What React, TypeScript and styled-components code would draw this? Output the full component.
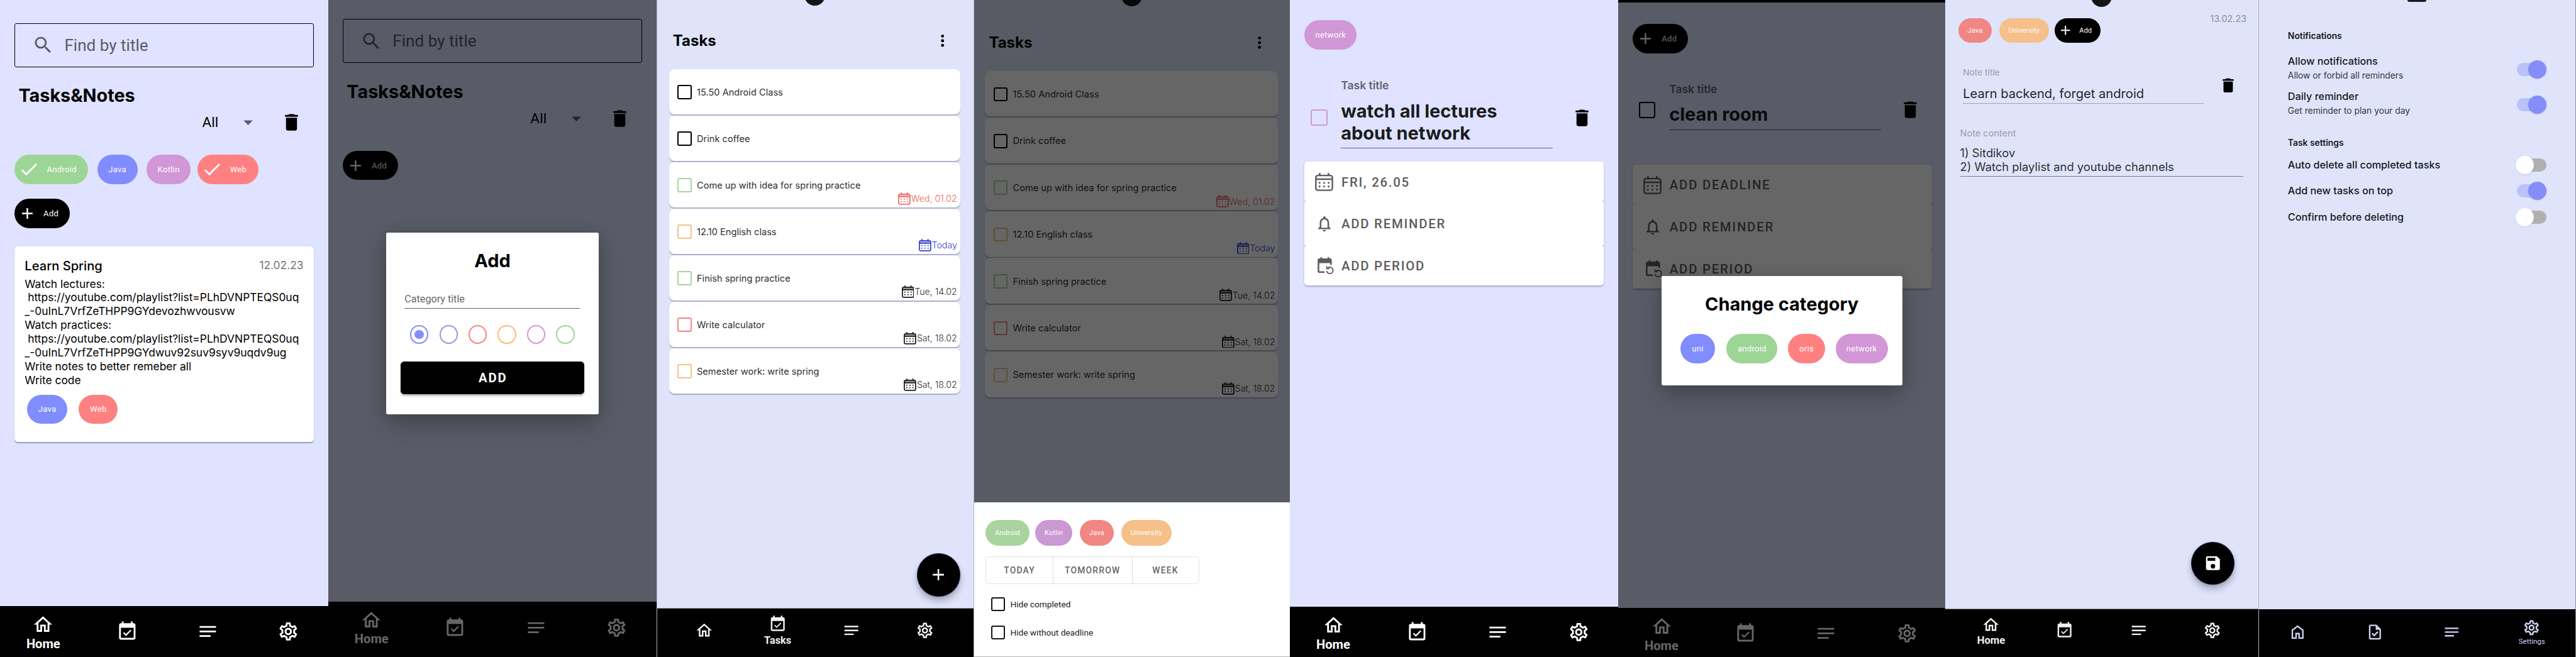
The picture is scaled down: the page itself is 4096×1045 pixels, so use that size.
import React from 'react';
import styled, { createGlobalStyle, css } from 'styled-components';
import { MdOutlineSettings } from 'react-icons/md';

/* 1rem = ten design pixels of the 5148px wide board */
const GlobalStyle = createGlobalStyle`
  html { font-size: 7.9565px; }
  body { margin: 0; background: #fff; overflow: hidden; font-family: Inter, Roboto, sans-serif; color: #000; }
  *, *::before, *::after { box-sizing: border-box; }
`;

const rem = (n: number) => `${n / 10}rem`;
const roboto = css`font-family: Roboto, 'Noto Sans', sans-serif;`;

const palette = {
  lavender: '#dfe3ff',
  mist: '#dfe4fb',
  green: '#9dd596',
  blue: '#818cff',
  violet: '#a097d5',
  purple: '#d197d6',
  red: '#ff8080',
  orange: '#fdbb78',
  softGreen: '#a9d49d',
  softPurple: '#ca98d2',
  softRed: '#f08784',
  softOrange: '#f5c089',
};

const Board = styled.div`
  display: flex;
  width: 100vw;
  height: 1045px;
  overflow: hidden;
`;

const Screen = styled.section<{ $w: number; $bg: string }>`
  position: relative;
  flex: none;
  display: flex;
  flex-direction: column;
  width: ${(p) => rem(p.$w)};
  height: 1045px;
  background: ${(p) => p.$bg};
  overflow: hidden;
`;

const EdgedScreen = styled(Screen)`
  border-left: 0.2rem solid #b0b3c3;
`;

const Scrim = styled.div`
  position: absolute;
  inset: 0;
  background: rgba(0, 0, 0, 0.6);
`;

const Camera = styled.div<{ $x: number; $y: number }>`
  position: absolute;
  left: ${(p) => rem(p.$x - 21)};
  top: ${(p) => rem(p.$y - 21)};
  width: 4.2rem;
  height: 4.2rem;
  border-radius: 50%;
  background: #151517;
`;

/* ---------- icons ---------- */

const Svg = styled.svg<{ $s: number }>`
  flex: none;
  display: block;
  width: ${(p) => rem(p.$s)};
  height: ${(p) => rem(p.$s)};
  fill: currentColor;
`;

const paths = {
  search: 'M15.5 14h-.79l-.28-.27A6.471 6.471 0 0 0 16 9.5 6.5 6.5 0 1 0 9.5 16c1.61 0 3.09-.59 4.23-1.57l.27.28v.79l5 4.99L20.49 19l-4.99-5zm-6 0C7.01 14 5 11.99 5 9.5S7.01 5 9.5 5 14 7.01 14 9.5 11.99 14 9.5 14z',
  trash: 'M6 19c0 1.1.9 2 2 2h8c1.1 0 2-.9 2-2V7H6v12zM19 4h-3.5l-1-1h-5l-1 1H5v2h14V4z',
  caret: 'M7 10l5 5 5-5z',
  check: 'M9 16.17L4.83 12l-1.42 1.41L9 19 21 7l-1.41-1.41z',
  plus: 'M19 13h-6v6h-2v-6H5v-2h6V5h2v6h6v2z',
  home: 'M12 5.69l5 4.5V18h-2v-6H9v6H7v-7.81l5-4.5M12 3L2 12h3v8h6v-6h2v6h6v-8h3L12 3z',
  homeNarrow: 'M6 19h3v-6h6v6h3v-9l-6-4.5L6 10v9zm-2 2V9l8-6 8 6v12h-7v-6h-2v6H4z',
  tasks: 'M16.53 11.06L15.47 10l-4.88 4.88-2.12-2.12-1.06 1.06L10.59 17l5.94-5.94zM19 3h-1V1h-2v2H8V1H6v2H5c-1.11 0-1.99.9-1.99 2L3 19c0 1.1.89 2 2 2h14c1.1 0 2-.9 2-2V5c0-1.1-.9-2-2-2zm0 16H5V8h14v11z',
  file: 'M10.95 18l5.65-5.65-1.45-1.45-4.225 4.225-2.1-2.1L7.4 14.45 10.95 18zM6 22q-.825 0-1.412-.587Q4 20.825 4 20V4q0-.825.588-1.413Q5.175 2 6 2h8l6 6v12q0 .825-.587 1.413Q18.825 22 18 22H6zm7-13V4H6v16h12V9h-5z',
  notes: 'M21 11.01L3 11v2h18zM3 16h12v2H3zM21 6H3v2.01L21 8z',
  bell: 'M12 22c1.1 0 2-.9 2-2h-4c0 1.1.9 2 2 2zm6-6v-5c0-3.07-1.63-5.64-4.5-6.32V4c0-.83-.67-1.5-1.5-1.5s-1.5.67-1.5 1.5v.68C7.64 5.36 6 7.92 6 11v5l-2 2v1h16v-1l-2-2zm-2 1H8v-6c0-2.48 1.51-4.5 4-4.5s4 2.02 4 4.5v6z',
  save: 'M17 3H5a2 2 0 0 0-2 2v14a2 2 0 0 0 2 2h14c1.1 0 2-.9 2-2V7l-4-4zm-5 16c-1.66 0-3-1.34-3-3s1.34-3 3-3 3 1.34 3 3-1.34 3-3 3zm3-10H5V5h10v4z',
  more: 'M12 8c1.1 0 2-.9 2-2s-.9-2-2-2-2 .9-2 2 .9 2 2 2zm0 2c-1.1 0-2 .9-2 2s.9 2 2 2 2-.9 2-2-.9-2-2-2zm0 6c-1.1 0-2 .9-2 2s.9 2 2 2 2-.9 2-2-.9-2-2-2z',
};

type Glyph = keyof typeof paths;

const Icon = ({ name, size, className }: { name: Glyph; size: number; className?: string }) => (
  <Svg $s={size} viewBox="0 0 24 24" className={className}>
    <path d={paths[name]} />
  </Svg>
);

const CalendarIcon = ({ size, shaded }: { size: number; shaded?: boolean }) => (
  <Svg $s={size} viewBox="0 0 36 36">
    {shaded && <path d="M2 6h32v6H2z" opacity="0.45" />}
    <rect x="1.6" y="5.2" width="32.8" height="29.2" rx="4" fill="none" stroke="currentColor" strokeWidth={shaded ? 3.3 : 3} />
    <path d="M1.5 11h33v3h-33zM7.6 1q0-1 1.700-1t1.700 1v5H7.600zM25 1q0-1 1.700-1t1.700 1v5H25z" />
    {[19.6, 26.8].map((y) => [9, 18, 27].map((x) => <circle key={`${x}-${y}`} cx={x} cy={y} r="1.9" />))}
  </Svg>
);

const PeriodIcon = ({ size }: { size: number }) => (
  <Svg $s={size} viewBox="0 0 34 34">
    <path d="M6 0h3v2.6h11.2V0h3v2.6H25q3.4 0 3.4 3.4v9.5h-3.2V12H3.4v16.2H14v3.2H3.2Q.2 31.4.2 28.2V6q0-3.4 3.3-3.4H6z" />
    <path d="M19.6 22.4a6.4 6.4 0 1 1-1.4 5" fill="none" stroke="currentColor" strokeWidth="2.3" />
    <path d="M17.2 17.6h2v4.5h4.300v2h-6.300z" />
  </Svg>
);

/* ---------- shared controls ---------- */

const ChipBox = styled.span<{ $w: number; $h: number; $bg: string; $font: number; $icon: boolean; $ml: number }>`
  flex: none;
  display: flex;
  align-items: center;
  justify-content: ${(p) => (p.$icon ? 'flex-start' : 'center')};
  gap: ${(p) => rem(p.$h * 0.24)};
  width: ${(p) => rem(p.$w)};
  height: ${(p) => rem(p.$h)};
  margin-left: ${(p) => rem(p.$ml)};
  padding-left: ${(p) => (p.$icon ? rem(p.$h * 0.127) : 0)};
  border-radius: 99rem;
  background: ${(p) => p.$bg};
  color: #fff;
  ${roboto}
  font-size: ${(p) => rem(p.$font)};
  letter-spacing: 0.024em;
  white-space: nowrap;
`;

type ChipProps = { label: string; bg: string; w: number; h?: number; font?: number; icon?: Glyph; ml?: number };

const Chip = ({ label, bg, w, h = 58.6, font = 16.4, icon, ml = 0 }: ChipProps) => (
  <ChipBox $w={w} $h={h} $bg={bg} $font={font} $icon={!!icon} $ml={ml}>
    {icon && <Icon name={icon} size={icon === 'check' ? h * 0.735 : h * 0.62} />}
    {label}
  </ChipBox>
);

const AddChip = () => <Chip label="Add" bg="#000" w={110.5} icon="plus" />;

const Row = styled.div<{ $mt?: number; $pl?: number; $gap?: number }>`
  display: flex;
  margin-top: ${(p) => rem(p.$mt ?? 0)};
  padding-left: ${(p) => rem(p.$pl ?? 0)};
  gap: ${(p) => rem(p.$gap ?? 0)};
`;

const Box = styled.span<{ $s: number; $c: string; $mt?: number }>`
  flex: none;
  width: ${(p) => rem(p.$s)};
  height: ${(p) => rem(p.$s)};
  margin-top: ${(p) => rem(p.$mt ?? 0)};
  border: ${(p) => rem(p.$s * 0.112)} solid ${(p) => p.$c};
  border-radius: ${(p) => rem(p.$s * 0.13)};
`;

const Fab = styled.button<{ $x: number; $y: number }>`
  position: absolute;
  left: ${(p) => rem(p.$x)};
  top: ${(p) => rem(p.$y)};
  display: grid;
  place-items: center;
  width: 8.6rem;
  height: 8.6rem;
  padding: 0;
  border: 0.1rem solid #15154d;
  border-radius: 50%;
  background: #000;
  color: #fff;
  box-shadow: 0 0.9rem 1.4rem rgba(0, 0, 0, 0.24), 0 0.2rem 0.6rem rgba(0, 0, 0, 0.14);
`;

/* ---------- bottom navigation ---------- */

const NavBar = styled.nav<{ $h: number; $edge: string; $pl: number; $c: string }>`
  flex: none;
  display: flex;
  height: ${(p) => rem(p.$h)};
  margin-top: auto;
  padding-left: ${(p) => rem(p.$pl)};
  background: #000;
  color: ${(p) => p.$c};
  box-shadow: 0 -0.15rem 0.1rem ${(p) => p.$edge};
`;

const NavItem = styled.a<{ $w: number; $top: number }>`
  flex: none;
  display: flex;
  flex-direction: column;
  align-items: center;
  width: ${(p) => rem(p.$w)};
  padding-top: ${(p) => rem(p.$top)};
`;

const NavLabel = styled.span<{ $size: number; $bold: boolean; $mt: number }>`
  ${roboto}
  margin-top: ${(p) => rem(p.$mt)};
  font-size: ${(p) => rem(p.$size)};
  font-weight: ${(p) => (p.$bold ? 700 : 400)};
  line-height: 2.8rem;
`;

const Gear = styled(MdOutlineSettings)<{ $s: number }>`
  flex: none;
  width: ${(p) => rem(p.$s)};
  height: ${(p) => rem(p.$s)};
`;

type NavProps = {
  h: number;
  active: 'Home' | 'Tasks' | 'Settings';
  widths: number[];
  icon: number;
  center: number;
  activeCenter: number;
  labelCenter: number;
  label: number;
  bold?: boolean;
  pl?: number;
  color?: string;
  edge?: string;
  symbols?: Glyph[];
};

const BottomNav = (p: NavProps) => {
  const [first, second, third] = p.symbols ?? ['home', 'tasks', 'notes'];
  const items: [string, Glyph | null][] = [
    ['Home', first],
    ['Tasks', second],
    ['Notes', third],
    ['Settings', null],
  ];
  return (
    <NavBar $h={p.h} $edge={p.edge ?? 'transparent'} $pl={p.pl ?? 0} $c={p.color ?? '#fff'}>
      {items.map(([name, glyph], i) => {
        const on = name === p.active;
        const mid = on ? p.activeCenter : p.center;
        return (
          <NavItem key={name} $w={p.widths[i]} $top={mid - p.icon / 2}>
            {glyph ? <Icon name={glyph} size={p.icon} /> : <Gear $s={p.icon} />}
            {on && (
              <NavLabel $size={p.label} $bold={p.bold ?? true} $mt={p.labelCenter - 14 - mid - p.icon / 2}>
                {name}
              </NavLabel>
            )}
          </NavItem>
        );
      })}
    </NavBar>
  );
};

const wideNav = { widths: [173, 161.5, 161.5, 161.5], icon: 43.7, center: 50.3, activeCenter: 36.8, labelCenter: 75.3, label: 25.3 };
const compactNav = { widths: [147.3, 147.3, 147.3, 147.3], icon: 37, center: 43.2 };

/* ---------- home ---------- */

const HomeBody = styled.div<{ $top: number }>`
  display: flex;
  flex-direction: column;
  padding: ${(p) => rem(p.$top)} 2.85rem 0 2.9rem;
`;

const SearchField = styled.div`
  display: flex;
  align-items: center;
  gap: 2.1rem;
  height: 8.75rem;
  padding-left: 3.35rem;
  border: 0.2rem solid #000;
  border-radius: 0.4rem;
  color: #5a5c68;
  ${roboto}
  font-size: 3.28rem;
`;

const HomeTitle = styled.h1`
  margin: 3.5rem 0 0 0.8rem;
  font-size: 3.62rem;
  font-weight: 700;
  line-height: 4.4rem;
`;

const FilterRow = styled.div`
  display: flex;
  align-items: center;
  height: 4.4rem;
  margin: 1rem 0 4.25rem;
  padding-left: 37.5rem;
`;

const FilterValue = styled.span`
  ${roboto}
  width: 7rem;
  font-size: 2.85rem;
`;

const CaretIcon = styled(Icon)`
  margin-right: 4.3rem;
  color: #5a5c68;
`;

const HomeHeader = () => (
  <>
    <SearchField>
      <Icon name="search" size={44} />
      Find by title
    </SearchField>
    <HomeTitle>Tasks&amp;Notes</HomeTitle>
    <FilterRow>
      <FilterValue>All</FilterValue>
      <CaretIcon name="caret" size={44} />
      <Icon name="trash" size={44} />
    </FilterRow>
  </>
);

const NoteCard = styled.article`
  height: 39.15rem;
  margin-top: 3.6rem;
  padding: 2.6rem 2.1rem 0 2.05rem;
  border-radius: 0.7rem;
  background: #fff;
  box-shadow: 0 0.2rem 0.2rem rgba(60, 70, 100, 0.45);
`;

const NoteHead = styled.header`
  display: flex;
  justify-content: space-between;
  font-size: 2.53rem;
  font-weight: 500;
  line-height: 3rem;
`;

const NoteDate = styled.time`
  color: #757575;
  font-size: 2.187rem;
  font-weight: 400;
  line-height: 2.6rem;
`;

const NoteText = styled.p`
  margin: 0.55rem 0 1.5rem;
  font-size: 2.187rem;
  line-height: 2.75rem;
  white-space: pre;
`;

const noteText = [
  'Watch lectures:',
  ' https://youtube.com/playlist?list=PLhDVNPTEQS0uq',
  '_-0uInL7VrfZeTHPP9GYdevozhwvousvw',
  'Watch practices:',
  ' https://youtube.com/playlist?list=PLhDVNPTEQS0uq',
  '_-0uInL7VrfZeTHPP9GYdwuv92suv9syv9uqdv9ug',
  'Write notes to better remeber all',
  'Write code',
].join('\n');

const HomeScreen = () => (
  <Screen $w={656} $bg={palette.lavender}>
    <HomeBody $top={46.5}>
      <HomeHeader />
      <Row $gap={18.3}>
        <Chip label="Android" bg={palette.green} w={147} icon="check" />
        <Chip label="Java" bg={palette.blue} w={80.5} />
        <Chip label="Kotlin" bg={palette.purple} w={88} />
        <Chip label="Web" bg={palette.red} w={121.5} icon="check" ml={-4.3} />
      </Row>
      <Row $mt={29.6}>
        <AddChip />
      </Row>
      <NoteCard>
        <NoteHead>
          Learn Spring
          <NoteDate>12.02.23</NoteDate>
        </NoteHead>
        <NoteText>{noteText}</NoteText>
        <Row $pl={4.5} $gap={22.7}>
          <Chip label="Java" bg={palette.blue} w={80.7} />
          <Chip label="Web" bg={palette.red} w={78.3} />
        </Row>
      </NoteCard>
    </HomeBody>
    <BottomNav {...wideNav} h={101.5} active="Home" />
  </Screen>
);

/* ---------- dialogs ---------- */

const Dialog = styled.div<{ $x: number; $y: number; $w: number; $h: number; $pt: number }>`
  position: absolute;
  left: ${(p) => rem(p.$x)};
  top: ${(p) => rem(p.$y)};
  display: flex;
  flex-direction: column;
  width: ${(p) => rem(p.$w)};
  height: ${(p) => rem(p.$h)};
  padding-top: ${(p) => rem(p.$pt)};
  border-radius: 0.35rem;
  background: #fff;
  box-shadow: 0 1.8rem 4.5rem rgba(0, 0, 0, 0.24), 0 0 2.5rem rgba(0, 0, 0, 0.08);
`;

const DialogTitle = styled.h2`
  margin: 0;
  text-align: center;
  font-size: 3.64rem;
  font-weight: 700;
  line-height: 4.4rem;
`;

const CategoryInput = styled.div`
  width: 35.05rem;
  margin: 4.1rem 0 0 3.63rem;
  padding-bottom: 0.35rem;
  border-bottom: 0.15rem solid #606060;
  color: #696969;
  ${roboto}
  font-size: 2.03rem;
  line-height: 2.8rem;
`;

const Swatches = styled.div`
  display: flex;
  gap: 2.16rem;
  margin: 3.35rem 0 0 4.74rem;
`;

const Swatch = styled.span<{ $c: string; $on: boolean }>`
  display: grid;
  place-items: center;
  width: 3.68rem;
  height: 3.68rem;
  border: 0.36rem solid ${(p) => p.$c};
  border-radius: 50%;
  &::after {
    content: '';
    width: 1.82rem;
    height: 1.82rem;
    border-radius: 50%;
    background: ${(p) => (p.$on ? p.$c : 'transparent')};
  }
`;

const PrimaryButton = styled.button`
  ${roboto}
  width: 36.6rem;
  height: 6.55rem;
  margin: 3.6rem 0 0 2.88rem;
  padding: 0 0 0 0.23rem;
  border: 0;
  border-radius: 0.7rem;
  background: #000;
  color: #fff;
  font-size: 2.55rem;
  font-weight: 700;
  letter-spacing: 0.0892em;
  box-shadow: 0 0.3rem 0.4rem rgba(0, 0, 0, 0.25);
`;

const swatches = [palette.blue, palette.violet, '#fe8080', palette.orange, palette.purple, palette.green];

const AddCategoryScreen = () => (
  <Screen $w={656} $bg={palette.lavender}>
    <HomeBody $top={38.3}>
      <HomeHeader />
      <Row>
        <AddChip />
      </Row>
    </HomeBody>
    <BottomNav {...wideNav} h={111} center={52} active="Home" />
    <Scrim />
    <Dialog $x={116.2} $y={465} $w={423.8} $h={363.5} $pt={34}>
      <DialogTitle>Add</DialogTitle>
      <CategoryInput>Category title</CategoryInput>
      <Swatches>
        {swatches.map((c, i) => (
          <Swatch key={c} $c={c} $on={i === 0} />
        ))}
      </Swatches>
      <PrimaryButton>ADD</PrimaryButton>
    </Dialog>
  </Screen>
);

/* ---------- task list ---------- */

const TasksHeader = styled.header<{ $top: number; $pl: number }>`
  display: flex;
  align-items: center;
  justify-content: space-between;
  height: 4rem;
  margin-top: ${(p) => rem(p.$top)};
  padding: 0 4.3rem 0 ${(p) => rem(p.$pl)};
`;

const TasksTitle = styled.h1`
  margin: 0;
  font-size: 3.02rem;
  font-weight: 700;
`;

const List = styled.ul<{ $top: number; $pl: number; $gap: number }>`
  display: flex;
  flex-direction: column;
  gap: ${(p) => rem(p.$gap)};
  margin: ${(p) => rem(p.$top)} 0 0 ${(p) => rem(p.$pl)};
  padding: 0;
  list-style: none;
`;

const TaskCard = styled.li<{ $w: number; $h: number }>`
  display: flex;
  align-items: center;
  gap: 1.05rem;
  width: ${(p) => rem(p.$w)};
  height: ${(p) => rem(p.$h)};
  padding: 0.2rem 0.6rem 0 1.65rem;
  border-radius: 1.1rem;
  background: #fff;
  color: #2f2f31;
  box-shadow: 0 0.2rem 0.15rem rgba(60, 70, 100, 0.35);
  font-size: 1.84rem;
`;

const Due = styled.time<{ $c: string; $ic: string }>`
  display: flex;
  align-items: center;
  align-self: flex-end;
  gap: 0.1rem;
  height: 2.6rem;
  margin: 0 0 0.46rem auto;
  color: ${(p) => p.$c};
  font-size: 1.78rem;
  font-weight: 300;
  svg { color: ${(p) => p.$ic}; }
`;

type Task = { title: string; color: string; due?: string; tone?: string; ink?: string };

const tasks: Task[] = [
  { title: '15.50 Android Class', color: '#000' },
  { title: 'Drink coffee', color: '#000' },
  { title: 'Come up with idea for spring practice', color: '#a9d49d', due: 'Wed, 01.02', tone: '#ee5f5b', ink: '#ee6c68' },
  { title: '12.10 English class', color: '#f5c089', due: 'Today', tone: '#3139cc', ink: '#3a42cc' },
  { title: 'Finish spring practice', color: '#a9d49d', due: 'Tue, 14.02' },
  { title: 'Write calculator', color: '#f08784', due: 'Sat, 18.02' },
  { title: 'Semester work: write spring', color: '#f5c089', due: 'Sat, 18.02' },
];

const TaskList = ({ w, h, gap, top, pl }: { w: number; h: number; gap: number; top: number; pl: number }) => (
  <List $top={top} $pl={pl} $gap={gap}>
    {tasks.map((t) => (
      <TaskCard key={t.title} $w={w} $h={h}>
        <Box $s={28.3} $c={t.color} />
        {t.title}
        {t.due && (
          <Due $c={t.tone ?? '#2f2f31'} $ic={t.ink ?? '#1a1a1a'}>
            <CalendarIcon size={24.8} shaded />
            {t.due}
          </Due>
        )}
      </TaskCard>
    ))}
  </List>
);

const TasksScreen = () => (
  <EdgedScreen $w={633} $bg={palette.mist}>
    <Camera $x={315} $y={-10} />
    <TasksHeader $top={61.5} $pl={31.3}>
      <TasksTitle>Tasks</TasksTitle>
      <Icon name="more" size={37} />
    </TasksHeader>
    <TaskList w={581.4} h={90.4} gap={2.6} top={36.8} pl={24} />
    <Fab $x={519.6} $y={1106.5}>
      <Icon name="plus" size={38} />
    </Fab>
    <BottomNav {...compactNav} h={96.6} pl={20} active="Tasks" activeCenter={30.9} labelCenter={63.8} label={20.43} color="#f2f2f2" edge="#7c7f8c" />
  </EdgedScreen>
);

const Sheet = styled.div`
  position: absolute;
  left: 0;
  right: 0;
  bottom: 0;
  height: 30.9rem;
  padding: 3.55rem 0 0 2.36rem;
  border-bottom: 0.15rem solid #b5b5b5;
  background: #fff;
`;

const Segments = styled.div`
  display: flex;
  width: 42.75rem;
  height: 5.57rem;
  margin: 2.1rem 0 1.25rem;
  border: 0.2rem solid #e2e2e2;
  border-radius: 0.6rem;
  ${roboto}
  font-size: 1.74rem;
  font-weight: 500;
  letter-spacing: 0.0892em;
  color: #656565;
`;

const Segment = styled.span<{ $w: number }>`
  display: grid;
  place-items: center;
  width: ${(p) => rem(p.$w)};
  & + & { border-left: 0.15rem solid #dcdcdc; }
`;

const CheckLine = styled.label`
  display: flex;
  align-items: center;
  gap: 1rem;
  height: 5.6rem;
  padding-left: 1.1rem;
  ${roboto}
  font-size: 1.72rem;
  color: #222;
`;

const TaskFilterScreen = () => (
  <EdgedScreen $w={633} $bg={palette.mist}>
    <Camera $x={315.5} $y={-8.5} />
    <TasksHeader $top={64.5} $pl={30}>
      <TasksTitle>Tasks</TasksTitle>
      <Icon name="more" size={37} />
    </TasksHeader>
    <TaskList w={585.3} h={91.2} gap={2.35} top={37.3} pl={22.6} />
    <Scrim />
    <Sheet>
      <Row>
        <Chip label="Android" bg={palette.softGreen} w={87.4} h={51} font={13.7} />
        <Chip label="Kotlin" bg={palette.softPurple} w={74.2} h={51} font={13.7} ml={11.4} />
        <Chip label="Java" bg={palette.softRed} w={68.7} h={51} font={13.7} ml={14.7} />
        <Chip label="University" bg={palette.softOrange} w={100.4} h={51} font={13.7} ml={14.6} />
      </Row>
      <Segments>
        <Segment $w={132.5}>TODAY</Segment>
        <Segment $w={158.3}>TOMORROW</Segment>
        <Segment $w={133}>WEEK</Segment>
      </Segments>
      <CheckLine>
        <Box $s={28.2} $c="#151515" />
        Hide completed
      </CheckLine>
      <CheckLine>
        <Box $s={28.2} $c="#151515" />
        Hide without deadline
      </CheckLine>
    </Sheet>
  </EdgedScreen>
);

/* ---------- task details ---------- */

const TitleEditor = styled.div<{ $mt: number }>`
  display: flex;
  align-items: flex-start;
  margin-top: ${(p) => rem(p.$mt)};
  padding-left: 4.16rem;
`;

const TitleField = styled.div`
  width: 42.35rem;
  margin: 0 3.6rem 0 2.73rem;
  padding-bottom: 0.72rem;
  border-bottom: 0.2rem solid #63656f;
`;

const FieldLabel = styled.div`
  margin-bottom: 1.58rem;
  color: #636571;
  font-size: 2.2rem;
  font-weight: 600;
  line-height: 2.8rem;
`;

const FieldValue = styled.div`
  color: #1b1c20;
  font-size: 3.64rem;
  font-weight: 700;
  line-height: 4.35rem;
  white-space: pre;
`;

const TrashSlot = styled.span<{ $mt: number }>`
  margin-top: ${(p) => rem(p.$mt)};
`;

const Options = styled.div<{ $mt: number }>`
  display: flex;
  flex-direction: column;
  width: 59.85rem;
  margin: ${(p) => rem(p.$mt)} 0 0 2.88rem;
  border-radius: 0.6rem;
  background: linear-gradient(#c7cbe0, #c7cbe0) 0 7.4rem / 100% 9.9rem no-repeat;
  box-shadow: 0 0.2rem 0.3rem rgba(60, 70, 100, 0.35);
`;

const Option = styled.div<{ $h: number; $round: boolean }>`
  display: flex;
  align-items: center;
  height: ${(p) => rem(p.$h)};
  padding-top: 0.2rem;
  border-radius: ${(p) => (p.$round ? '0.6rem' : 0)};
  background: #fff;
  color: #5b5c5c;
  ${roboto}
  font-size: 2.55rem;
  font-weight: 500;
  letter-spacing: 0.0892em;
`;

const OptionIcon = styled.span<{ $shift?: number }>`
  display: grid;
  place-items: center;
  width: 4rem;
  margin: 0 1.4rem 0 2rem;
  padding-left: ${(p) => rem(p.$shift ?? 0)};
`;

const OptionList = ({ mt, deadline }: { mt: number; deadline: string }) => (
  <Options $mt={mt}>
    <Option $h={80} $round>
      <OptionIcon><CalendarIcon size={36.3} /></OptionIcon>
      {deadline}
    </Option>
    <Option $h={87.2} $round={false}>
      <OptionIcon><Icon name="bell" size={37.5} /></OptionIcon>
      ADD REMINDER
    </Option>
    <Option $h={81.1} $round>
      <OptionIcon $shift={6}><PeriodIcon size={34} /></OptionIcon>
      ADD PERIOD
    </Option>
  </Options>
);

const TaskScreen = () => (
  <Screen $w={656} $bg={palette.lavender}>
    <Row $mt={40.8} $pl={28.8}>
      <Chip label="network" bg={palette.purple} w={104.7} h={59} />
    </Row>
    <TitleEditor $mt={57.9}>
      <Box $s={33} $c={palette.purple} $mt={61.2} />
      <TitleField>
        <FieldLabel>Task title</FieldLabel>
        <FieldValue>{'watch all lectures\nabout network'}</FieldValue>
      </TitleField>
      <TrashSlot $mt={55.6}><Icon name="trash" size={44} /></TrashSlot>
    </TitleEditor>
    <OptionList mt={26} deadline="FRI, 26.05" />
    <BottomNav {...wideNav} h={100} center={50} active="Home" />
  </Screen>
);

const StatusBar = styled.div`
  flex: none;
  height: 0.5rem;
  background: #000;
`;

const ChangeCategoryScreen = () => (
  <Screen $w={654} $bg={palette.lavender}>
    <StatusBar />
    <Row $mt={43} $pl={29}>
      <AddChip />
    </Row>
    <TitleEditor $mt={57.6}>
      <Box $s={33} $c="#000" $mt={39} />
      <TitleField>
        <FieldLabel>Task title</FieldLabel>
        <FieldValue>clean room</FieldValue>
      </TitleField>
      <TrashSlot $mt={33.6}><Icon name="trash" size={44} /></TrashSlot>
    </TitleEditor>
    <OptionList mt={69} deadline="ADD DEADLINE" />
    <BottomNav {...wideNav} h={98} center={50.3} active="Home" />
    <Scrim />
    <Dialog $x={86.2} $y={551.5} $w={481.2} $h={219} $pt={34}>
      <DialogTitle>Change category</DialogTitle>
      <Row $mt={38.5} $pl={38.6}>
        <Chip label="uni" bg={palette.blue} w={68.4} />
        <Chip label="android" bg={palette.green} w={101.7} ml={23.5} />
        <Chip label="oris" bg={palette.red} w={73.4} ml={21.4} />
        <Chip label="network" bg={palette.purple} w={104.7} ml={21} />
      </Row>
    </Dialog>
  </Screen>
);

/* ---------- note details ---------- */

const NoteTop = styled.header`
  display: flex;
  margin-top: 3.6rem;
  padding: 0 2.4rem 0 2.59rem;
`;

const NoteStamp = styled.time`
  margin: -0.93rem 0 0 auto;
  color: #8d8f9d;
  font-size: 1.8rem;
  line-height: 2.2rem;
`;

const NoteTitleRow = styled.div`
  display: flex;
  align-items: flex-start;
  margin-top: 4.8rem;
  padding-left: 3.49rem;
`;

const NoteField = styled.div<{ $w: number; $line: string }>`
  width: ${(p) => rem(p.$w)};
  border-bottom: ${(p) => p.$line};
`;

const NoteLabel = styled.div<{ $size: number }>`
  color: #9b9dad;
  font-size: ${(p) => rem(p.$size)};
  line-height: 2.4rem;
`;

const NoteTitle = styled.div`
  margin: 1.2rem 0 0.28rem;
  color: #25262b;
  font-size: 2.531rem;
  line-height: 3.4rem;
`;

const NoteContent = styled.div`
  margin: 1.15rem 0 0.43rem;
  color: #303238;
  font-size: 2.308rem;
  line-height: 2.8rem;
  white-space: pre;
`;

const ContentSlot = styled.div`
  margin: 4.8rem 0 0 2.9rem;
`;

const NoteTrash = styled.span`
  margin: 1.85rem 0 0 3rem;
`;

const NoteScreen = () => (
  <Screen $w={625.5} $bg={palette.mist}>
    <Camera $x={312} $y={-7} />
    <NoteTop>
      <Chip label="Java" bg={palette.softRed} w={66.5} h={49.7} font={13.9} />
      <Chip label="University" bg={palette.softOrange} w={98.3} h={49.7} font={13.7} ml={15.6} />
      <Chip label="Add" bg="#000" w={91.9} h={49.7} font={13.7} icon="plus" ml={12.2} />
      <NoteStamp>13.02.23</NoteStamp>
    </NoteTop>
    <NoteTitleRow>
      <NoteField $w={480.8} $line="0.2rem solid #a1a3b4">
        <NoteLabel $size={17.3}>Note title</NoteLabel>
        <NoteTitle>Learn backend, forget android</NoteTitle>
      </NoteField>
      <NoteTrash><Icon name="trash" size={37.5} /></NoteTrash>
    </NoteTitleRow>
    <ContentSlot>
      <NoteField $w={566} $line="0.16rem solid #7b7e8b">
        <NoteLabel $size={18.3}>Note content</NoteLabel>
        <NoteContent>{'1) Sitdikov\n2) Watch playlist and youtube channels'}</NoteContent>
      </NoteField>
    </ContentSlot>
    <Fab $x={491.5} $y={1083}>
      <Icon name="save" size={37} />
    </Fab>
    <BottomNav {...compactNav} h={96} pl={17.5} active="Home" center={43} activeCenter={31} labelCenter={63} label={20.9} color="#f2f2f2" edge="#7c7f8c" />
  </Screen>
);

/* ---------- settings ---------- */

const SettingsBody = styled.div`
  padding: 6.07rem 5.92rem 0 5.75rem;
`;

const GroupTitle = styled.h3<{ $mt: number; $mb: number }>`
  margin: ${(p) => rem(p.$mt)} 0 ${(p) => rem(p.$mb)};
  color: #17181c;
  font-size: 1.745rem;
  font-weight: 600;
  line-height: 2.4rem;
`;

const Setting = styled.div<{ $h: number; $mb: number }>`
  display: flex;
  align-items: center;
  justify-content: space-between;
  height: ${(p) => rem(p.$h)};
  margin-bottom: ${(p) => rem(p.$mb)};
`;

const SettingName = styled.div`
  color: #17181c;
  font-size: 2.038rem;
  font-weight: 500;
  line-height: 2.8rem;
`;

const SettingHint = styled.div`
  margin-top: 0.31rem;
  color: #33353c;
  font-size: 1.74rem;
  line-height: 2.4rem;
`;

const Track = styled.span<{ $on: boolean; $mt: number }>`
  flex: none;
  display: flex;
  align-items: center;
  justify-content: ${(p) => (p.$on ? 'flex-end' : 'flex-start')};
  width: 5.9rem;
  height: 2.66rem;
  margin-top: ${(p) => rem(p.$mt)};
  border-radius: 1.33rem;
  background: ${(p) => (p.$on ? '#bbc2fa' : '#b0b0b0')};
  &::after {
    content: '';
    flex: none;
    width: 3.64rem;
    height: 3.64rem;
    margin-left: ${(p) => (p.$on ? 0 : '-0.24rem')};
    border-radius: 50%;
    background: ${(p) => (p.$on ? '#848df8' : '#fff')};
    box-shadow: 0 0.1rem 0.3rem rgba(90, 90, 140, 0.22);
  }
`;

const SettingItem = ({ name, hint, on }: { name: string; hint?: string; on: boolean }) => (
  <Setting $h={hint ? 55.1 : 52.3} $mb={hint ? 14.9 : 0}>
    <div>
      <SettingName>{name}</SettingName>
      {hint && <SettingHint>{hint}</SettingHint>}
    </div>
    <Track $on={on} $mt={hint ? 6 : 0.8} />
  </Setting>
);

const CameraEdge = styled.div`
  position: absolute;
  left: 29.7rem;
  top: 0;
  width: 3.7rem;
  height: 0.32rem;
  border-radius: 0 0 0.3rem 0.3rem;
  background: #1a1a1a;
`;

const RightEdge = styled.div`
  position: absolute;
  right: 0;
  top: 0;
  bottom: 0;
  width: 1px;
  background: #8d90a0;
`;

const SettingsScreen = () => (
  <EdgedScreen $w={634.6} $bg={palette.mist}>
    <CameraEdge />
    <SettingsBody>
      <GroupTitle $mt={0} $mb={23.9}>Notifications</GroupTitle>
      <SettingItem name="Allow notifications" hint="Allow or forbid all reminders" on />
      <SettingItem name="Daily reminder" hint="Get reminder to plan your day" on />
      <GroupTitle $mt={39.9} $mb={5.6}>Task settings</GroupTitle>
      <SettingItem name="Auto delete all completed tasks" on={false} />
      <SettingItem name="Add new tasks on top" on />
      <SettingItem name="Confirm before deleting" on={false} />
    </SettingsBody>
    <BottomNav
      h={96}
      active="Settings"
      symbols={['homeNarrow', 'file', 'notes']}
      widths={[154, 154, 154, 166]}
      icon={36}
      center={45.8}
      activeCenter={37}
      labelCenter={64.5}
      label={14.4}
      bold={false}
      color="#cfd3f2"
    />
    <RightEdge />
  </EdgedScreen>
);

export default function App() {
  return (
    <>
      <GlobalStyle />
      <Board>
        <HomeScreen />
        <AddCategoryScreen />
        <TasksScreen />
        <TaskFilterScreen />
        <TaskScreen />
        <ChangeCategoryScreen />
        <NoteScreen />
        <SettingsScreen />
      </Board>
    </>
  );
}
